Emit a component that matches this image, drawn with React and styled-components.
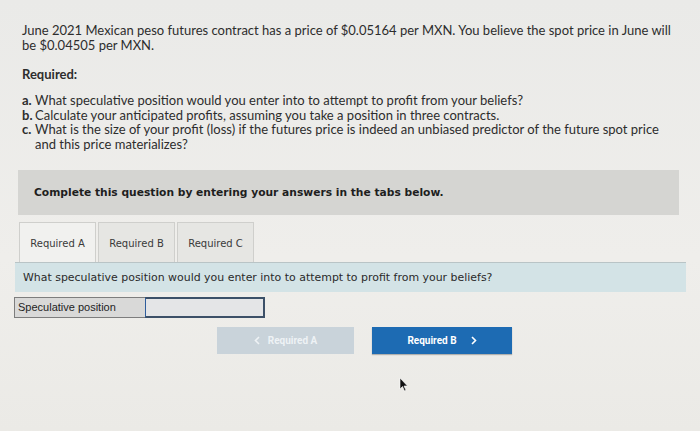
import styled, { createGlobalStyle } from "styled-components"

// ============================== Style  ==============================
const Global = createGlobalStyle`
    html, body {
        margin: 0;
        padding: 0;
        background: #ecebe8;
    }
`

const Page = styled.div`
    position: relative;
    width: 700px;
    height: 431px;
    box-sizing: border-box;
    padding: 23px 14px 0 14px;
    background: linear-gradient(180deg, #eaeae8 0%, #efeeeb 60%, #ebeae6 100%);
    overflow: hidden;
`

const Intro = styled.div`
    width: 652px;
    padding: 0 0 0 8px;
    font-family: Lato, "Open Sans", sans-serif;
    font-size: 13px;
    line-height: 15px;
    color: #2d2d2d;
`

const Para = styled.p`
    margin: 0 0 14px 0;
`

const Heading = styled.div`
    font-weight: 700;
    margin-bottom: 11px;
`

const List = styled.ol`
    margin: 0;
    padding: 0;
    list-style: none;
    line-height: 14.7px;
`

const Item = styled.li`
    display: flex;
    gap: 5px;
`

const Letter = styled.span`
    width: 8px;
    flex: none;
    font-weight: 700;
`

const Banner = styled.div`
    margin: 18px 7px 0 4px;
    height: 45px;
    box-sizing: border-box;
    padding: 0 0 0 16px;
    display: flex;
    align-items: center;
    background: #d5d5d2;
    font-family: "DejaVu Sans", Verdana, sans-serif;
    font-weight: 700;
    font-size: 10.7px;
    color: #1e1e1e;
`

const Tabs = styled.div`
    display: flex;
    gap: 2px;
    margin: 7px 0 0 5px;
`

const Tab = styled.div`
    width: 77px;
    height: 40px;
    box-sizing: border-box;
    padding-top: 2px;
    display: flex;
    align-items: center;
    justify-content: center;
    border: 1px solid #cfcfcc;
    border-bottom: none;
    background: ${p => (p.$active ? "#f1f1ef" : "#e6e6e3")};
    font-family: "DejaVu Sans", Verdana, sans-serif;
    font-size: 10px;
    color: #3a3a3a;
`

const Prompt = styled.div`
    margin-left: 1px;
    height: 30px;
    box-sizing: border-box;
    padding-left: 8px;
    display: flex;
    align-items: center;
    border-top: 1px solid #b9c4c6;
    background: #d3e3e6;
    font-family: "DejaVu Sans", Verdana, sans-serif;
    font-size: 10.95px;
    color: #2a2a2a;
`

const AnswerRow = styled.div`
    display: flex;
    margin-top: 5px;
    height: 21px;
`

const Label = styled.div`
    width: 131px;
    box-sizing: border-box;
    padding-left: 3px;
    display: flex;
    align-items: center;
    border: 1px solid #7d7d7d;
    border-right: none;
    background: #d9d9d8;
    font-family: "Liberation Sans", Arial, sans-serif;
    font-size: 11px;
    color: #1e1e1e;
`

const Field = styled.div`
    width: 120px;
    box-sizing: border-box;
    border: 2px solid #3c5068;
    border-left: 1px solid #2f5d9c;
    background: #e4e5e7;
`

const Nav = styled.div`
    display: flex;
    gap: 18px;
    margin: 9px 0 0 203px;
`

const NavButton = styled.div`
    width: ${p => (p.$primary ? "140px" : "137px")};
    height: 27px;
    display: flex;
    align-items: center;
    justify-content: center;
    gap: ${p => (p.$primary ? "14px" : "8px")};
    background: ${p => (p.$primary ? "#1d6bb3" : "#c9d3da")};
    color: ${p => (p.$primary ? "#ffffff" : "#eef2f5")};
    font-family: Roboto, "Liberation Sans", sans-serif;
    font-weight: 700;
    font-size: 10px;
    box-shadow: ${p => (p.$primary ? "0 1px 1px rgba(0,0,0,0.25)" : "none")};
`

const Cursor = styled.svg`
    position: absolute;
    left: 399px;
    top: 377px;
`

function Chevron({ left }) {
    return (
        <svg width="6" height="9" viewBox="0 0 6 9">
            <path d={left ? "M5 1 L1.5 4.5 L5 8" : "M1 1 L4.5 4.5 L1 8"}
                fill="none" stroke="currentColor" strokeWidth="1.6" />
        </svg>
    )
}

export default function App() {

    return (
        <>
            <Global />
            <Page>
                <Intro>
                    <Para>
                        June 2021 Mexican peso futures contract has a price of $0.05164 per MXN. You believe the spot price in June will be $0.04505 per MXN.
                    </Para>
                    <Heading>Required:</Heading>
                    <List>
                        <Item><Letter>a.</Letter><span>What speculative position would you enter into to attempt to profit from your beliefs?</span></Item>
                        <Item><Letter>b.</Letter><span>Calculate your anticipated profits, assuming you take a position in three contracts.</span></Item>
                        <Item><Letter>c.</Letter><span>What is the size of your profit (loss) if the futures price is indeed an unbiased predictor of the future spot price and this price materializes?</span></Item>
                    </List>
                </Intro>

                <Banner>Complete this question by entering your answers in the tabs below.</Banner>

                <Tabs>
                    <Tab $active>Required A</Tab>
                    <Tab>Required B</Tab>
                    <Tab>Required C</Tab>
                </Tabs>

                <Prompt>What speculative position would you enter into to attempt to profit from your beliefs?</Prompt>

                <AnswerRow>
                    <Label>Speculative position</Label>
                    <Field />
                </AnswerRow>

                <Nav>
                    <NavButton><Chevron left />Required A</NavButton>
                    <NavButton $primary>Required B<Chevron /></NavButton>
                </Nav>

                <Cursor width="10" height="15" viewBox="0 0 10 15">
                    <path d="M1 1 L1 12 L3.5 9.5 L5.5 14 L7 13.3 L5 9 L8.5 9 Z" fill="#111" stroke="#fff" strokeWidth="0.6" />
                </Cursor>
            </Page>
        </>
    )
}
